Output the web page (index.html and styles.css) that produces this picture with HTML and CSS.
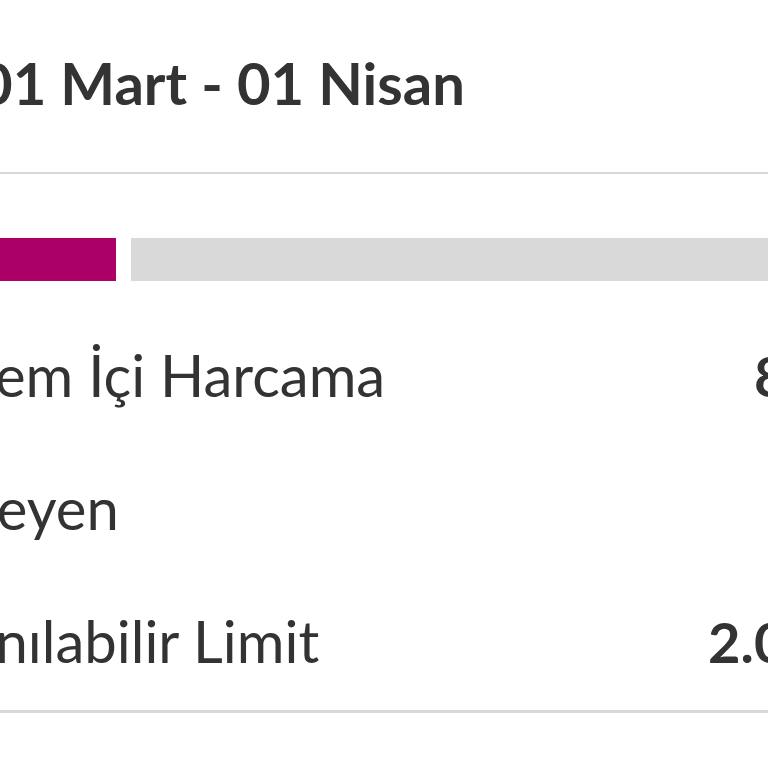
FILE: index.html
```html
<!DOCTYPE html>
<html lang="tr">
<head>
<meta charset="utf-8">
<title>Kart Limiti</title>
<link rel="stylesheet" href="styles.css">
</head>
<body>
<div class="viewport">
  <section class="card">
    <header class="period">
      <h1 class="period-title">01 Mart - 01 Nisan</h1>
    </header>
    <div class="limit-bar">
      <div class="limit-used" style="width: 20.57%"></div>
      <div class="limit-free"></div>
    </div>
    <ul class="summary">
      <li class="summary-row">
        <span class="summary-label">Dönem İçi Harcama</span>
        <span class="summary-value">850,00 TL</span>
      </li>
      <li class="summary-row">
        <span class="summary-label">Bekleyen</span>
        <span class="summary-value">0,00 TL</span>
      </li>
      <li class="summary-row">
        <span class="summary-label summary-label--available">Kullanılabilir Limit</span>
        <span class="summary-value">2.000,00 TL</span>
      </li>
    </ul>
  </section>
</div>
</body>
</html>
```
FILE: styles.css
```css
html, body {
  margin: 0;
  padding: 0;
  background: #ffffff;
}

body {
  font-family: Lato, "Open Sans", "Liberation Sans", sans-serif;
  color: #333333;
}

.viewport {
  width: 768px;
  height: 768px;
  overflow: hidden;
}

.card {
  margin-left: -114px;
  width: 1118px;
}

.period {
  padding: 48px 0 54px 93px;
  border-bottom: 2px solid #d8d8d8;
}

.period-title {
  margin: 0;
  font-size: 58px;
  line-height: 70px;
  font-weight: 700;
}

.limit-bar {
  display: flex;
  gap: 15px;
  height: 43px;
  margin-top: 64px;
}

.limit-used {
  background: #ab0066;
}

.limit-free {
  flex: 1;
  background: #d9d9d9;
}

.summary {
  list-style: none;
  margin: 0;
  padding: 58px 0 33px;
  display: flex;
  flex-direction: column;
  gap: 61px;
  border-bottom: 3px solid #d8d8d8;
}

.summary-row {
  display: flex;
  justify-content: space-between;
  align-items: baseline;
  height: 72px;
}

.summary-label {
  font-size: 58px;
  line-height: 72px;
  font-weight: 400;
}

.summary-label--available {
  margin-left: -16px;
}

.summary-value {
  font-size: 56px;
  line-height: 72px;
  font-weight: 700;
}
```
